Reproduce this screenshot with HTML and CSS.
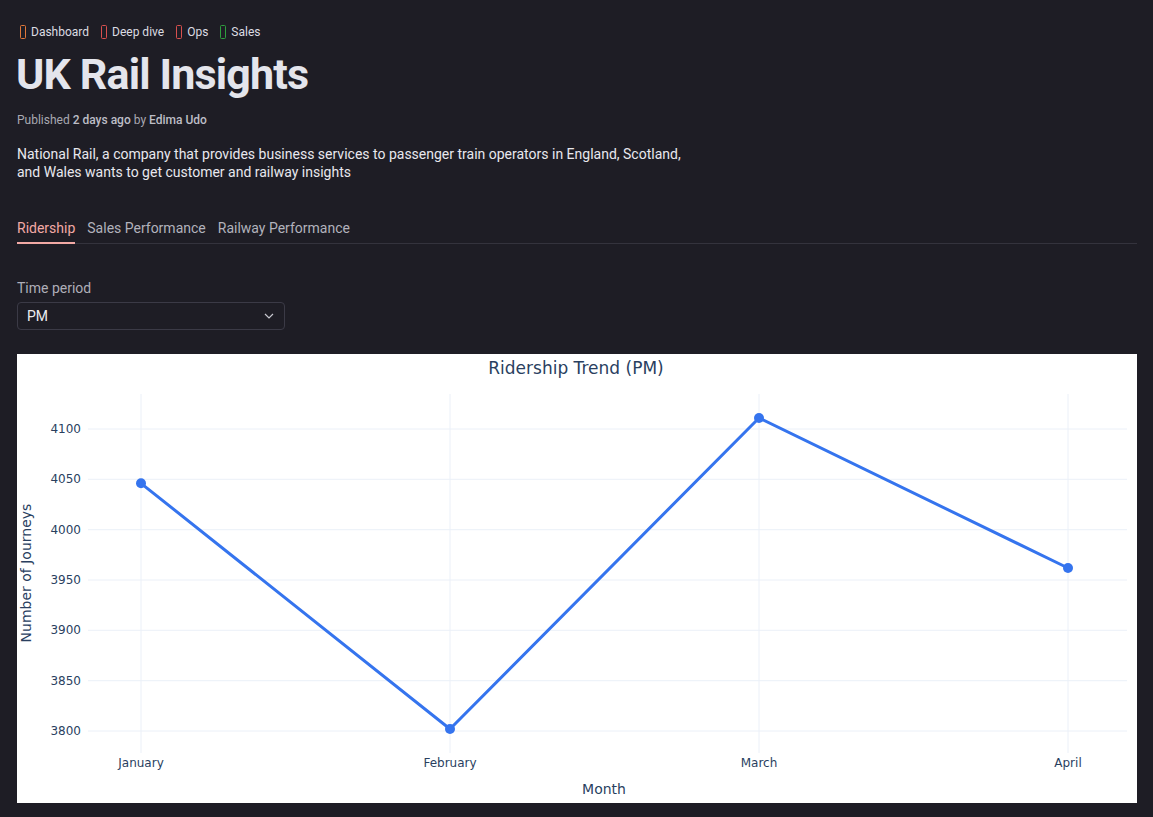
FILE: index.html
```html
<!DOCTYPE html>
<html lang="en">
<head>
<meta charset="utf-8">
<title>UK Rail Insights</title>
<link rel="stylesheet" href="styles.css">
</head>
<body>
<main class="page">
  <ul class="tags">
    <li class="tag"><span class="tag-mark mark-orange"></span>Dashboard</li>
    <li class="tag"><span class="tag-mark mark-red"></span>Deep dive</li>
    <li class="tag"><span class="tag-mark mark-red"></span>Ops</li>
    <li class="tag"><span class="tag-mark mark-green"></span>Sales</li>
  </ul>
  <h1 class="title">UK Rail Insights</h1>
  <p class="meta">Published <strong>2 days ago</strong> by <strong>Edima Udo</strong></p>
  <p class="desc">National Rail, a company that provides business services to passenger train operators in England, Scotland, and Wales wants to get customer and railway insights</p>

  <nav class="tabs">
    <span class="tab active">Ridership</span>
    <span class="tab">Sales Performance</span>
    <span class="tab">Railway Performance</span>
  </nav>

  <div class="field">
    <label class="field-label">Time period</label>
    <div class="select">
      <span>PM</span>
      <svg class="chev" width="10" height="6" viewBox="0 0 10 6"><path d="M1 1l4 4 4-4" fill="none" stroke="#c8c8d0" stroke-width="1.2"/></svg>
    </div>
  </div>

  <section class="chart">
    <svg width="1120" height="449" viewBox="0 0 1120 449" class="chart-svg">
      <text x="559" y="20" text-anchor="middle" class="c-title">Ridership Trend (PM)</text>
      <g class="grid">
        <line x1="71" x2="1110" y1="75" y2="75"/>
        <line x1="71" x2="1110" y1="125.3" y2="125.3"/>
        <line x1="71" x2="1110" y1="175.7" y2="175.7"/>
        <line x1="71" x2="1110" y1="226" y2="226"/>
        <line x1="71" x2="1110" y1="276.3" y2="276.3"/>
        <line x1="71" x2="1110" y1="326.7" y2="326.7"/>
        <line x1="71" x2="1110" y1="377" y2="377"/>
        <line x1="124" x2="124" y1="40" y2="399"/>
        <line x1="433" x2="433" y1="40" y2="399"/>
        <line x1="742" x2="742" y1="40" y2="399"/>
        <line x1="1051" x2="1051" y1="40" y2="399"/>
      </g>
      <g class="ytick" text-anchor="end">
        <text x="64" y="79">4100</text>
        <text x="64" y="129.3">4050</text>
        <text x="64" y="179.7">4000</text>
        <text x="64" y="230">3950</text>
        <text x="64" y="280.3">3900</text>
        <text x="64" y="330.7">3850</text>
        <text x="64" y="381">3800</text>
      </g>
      <g class="xtick" text-anchor="middle">
        <text x="124" y="413">January</text>
        <text x="433" y="413">February</text>
        <text x="742" y="413">March</text>
        <text x="1051" y="413">April</text>
      </g>
      <text x="587" y="440" text-anchor="middle" class="axis-title">Month</text>
      <text transform="translate(14 219) rotate(-90)" text-anchor="middle" class="axis-title">Number of Journeys</text>
      <polyline class="series" points="124,129.3 433,375 742,64 1051,214"/>
      <g class="marker">
        <circle cx="124" cy="129.3" r="5"/>
        <circle cx="433" cy="375" r="5"/>
        <circle cx="742" cy="64" r="5"/>
        <circle cx="1051" cy="214" r="5"/>
      </g>
    </svg>
  </section>
</main>
</body>
</html>
```

FILE: styles.css
```css
* { box-sizing: border-box; }
html, body { margin: 0; padding: 0; background: #1e1d25; }
body {
  font-family: "Roboto", "Noto Sans", sans-serif;
  color: #e3e3e8;
}
.page {
  padding: 23px 16px 0 17px;
}
.tags {
  list-style: none;
  margin: 0;
  padding: 0 0 0 3px;
  display: flex;
  gap: 12px;
  font-size: 12px;
  line-height: 18px;
  color: #dcdce2;
}
.tag { display: flex; align-items: center; gap: 5px; }
.tag-mark {
  display: inline-block;
  width: 6px;
  height: 14px;
  border-radius: 1.5px;
}
.mark-orange { border: 1px solid #e0783a; }
.mark-red { border: 1px solid #d9504f; }
.mark-green { border: 1px solid #2e9e3e; }
.title {
  margin: 8px 0 0 -1px;
  font-size: 43px;
  line-height: 50px;
  font-weight: 700;
  letter-spacing: -0.85px;
  color: #e4e5ec;
}
.meta {
  margin: 12px 0 0 0;
  font-size: 12px;
  line-height: 18px;
  color: #a9a9b2;
}
.meta strong { font-weight: 500; color: #bdbdc6; }
.desc {
  margin: 16px 0 0 0;
  max-width: 690px;
  font-size: 14px;
  line-height: 18px;
  color: #e8e8ee;
}
.tabs {
  margin-top: 34px;
  display: flex;
  gap: 12px;
  border-bottom: 1px solid #34333d;
  font-size: 14px;
  line-height: 18px;
  color: #b2b2bc;
}
.tab { padding: 4px 0 6px; margin-bottom: -1px; }
.tab.active { color: #f2a9a5; border-bottom: 2px solid #f2a9a5; padding-bottom: 5px; }
.field { margin-top: 35px; width: 268px; }
.field-label {
  display: block;
  font-size: 14px;
  line-height: 18px;
  color: #aeaeb8;
}
.select {
  margin-top: 5px;
  height: 28px;
  border: 1px solid #3b3a46;
  border-radius: 4px;
  display: flex;
  align-items: center;
  justify-content: space-between;
  padding: 0 10px 0 9px;
  font-size: 14px;
  color: #ececf0;
}
.chart {
  margin-top: 24px;
  width: 1120px;
  height: 449px;
  background: #ffffff;
}
.chart-svg { display: block; }
.chart-svg text { font-family: "DejaVu Sans", Verdana, sans-serif; fill: #2a3f5f; }
.c-title { font-size: 17px; }
.ytick text, .xtick text { font-size: 12px; }
.axis-title { font-size: 14px; }
.grid line { stroke: #ebf0f8; stroke-width: 1; }
.series { fill: none; stroke: #3574ee; stroke-width: 3; stroke-linejoin: round; }
.marker circle { fill: #3574ee; }
```
